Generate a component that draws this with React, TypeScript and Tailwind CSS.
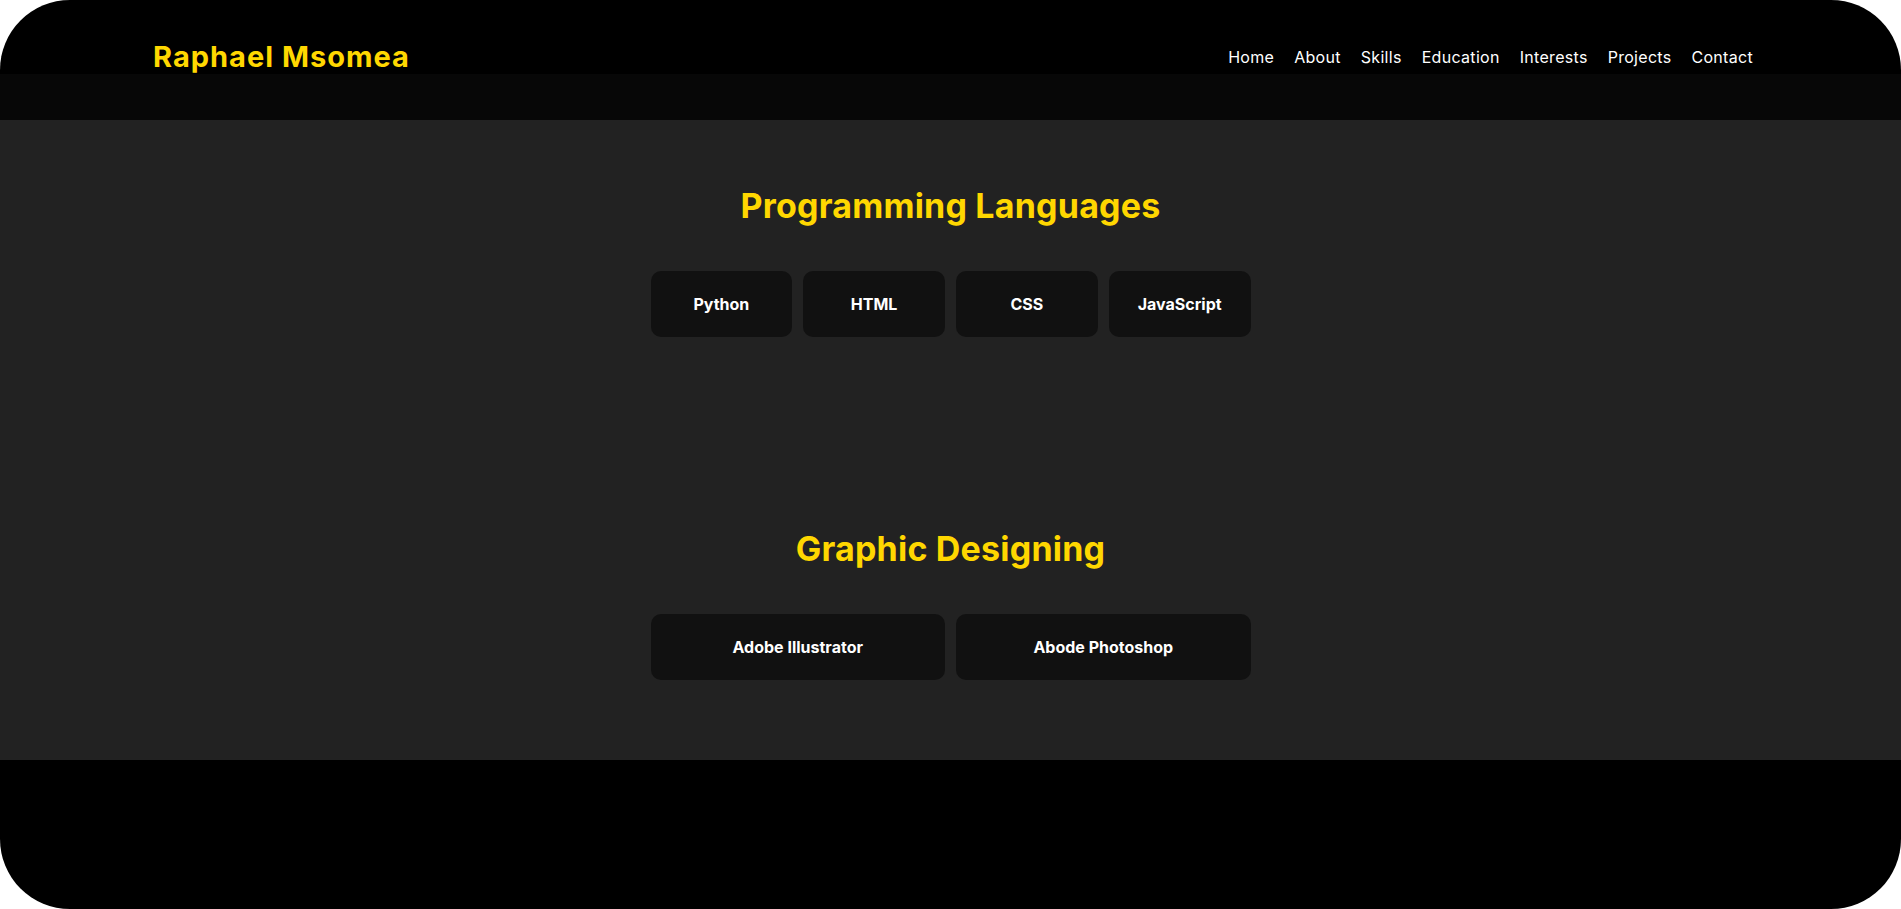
const navLinks = ["Home", "About", "Skills", "Education", "Interests", "Projects", "Contact"];

const skillGroups = [
  { title: "Programming Languages", items: ["Python", "HTML", "CSS", "JavaScript"], cols: "grid-cols-4" },
  { title: "Graphic Designing", items: ["Adobe Illustrator", "Abode Photoshop"], cols: "grid-cols-2" },
];

export default function App() {
  return (
    <div className="h-[909px] w-full bg-white font-['Inter',sans-serif]">
      <div className="flex h-full flex-col overflow-hidden rounded-[70px] bg-black">
        <header className="flex h-[74px] items-center justify-between pt-[40px] pr-[148px] pl-[153px]">
          <h1 className="text-[29px] leading-[34px] font-bold tracking-[1px] text-[#ffd700]">Raphael Msomea</h1>
          <nav className="flex items-center gap-[20px] text-[16px] leading-[34px] tracking-[0.3px] text-white">
            {navLinks.map((link) => (
              <a key={link} href="#" className="hover:text-[#ffd700]">{link}</a>
            ))}
          </nav>
        </header>
        <div className="h-[46px] bg-[#070707]" />

        <section className="h-[640px] bg-[#222222] pt-[65px]">
          {skillGroups.map((group, idx) => (
            <div key={group.title} className={idx === 0 ? "" : "mt-[191px]"}>
              <h2 className="text-center text-[34px] leading-[42px] font-bold tracking-[0.2px] text-[#ffd700]">{group.title}</h2>
              <div className={`mx-auto mt-[44px] grid w-[600px] gap-[11px] ${group.cols}`}>
                {group.items.map((item) => (
                  <div key={item} className="flex h-[66px] items-center justify-center rounded-[10px] bg-[#111111] text-[16px] font-bold text-white">
                    {item}
                  </div>
                ))}
              </div>
            </div>
          ))}
        </section>
      </div>
    </div>
  );
}
